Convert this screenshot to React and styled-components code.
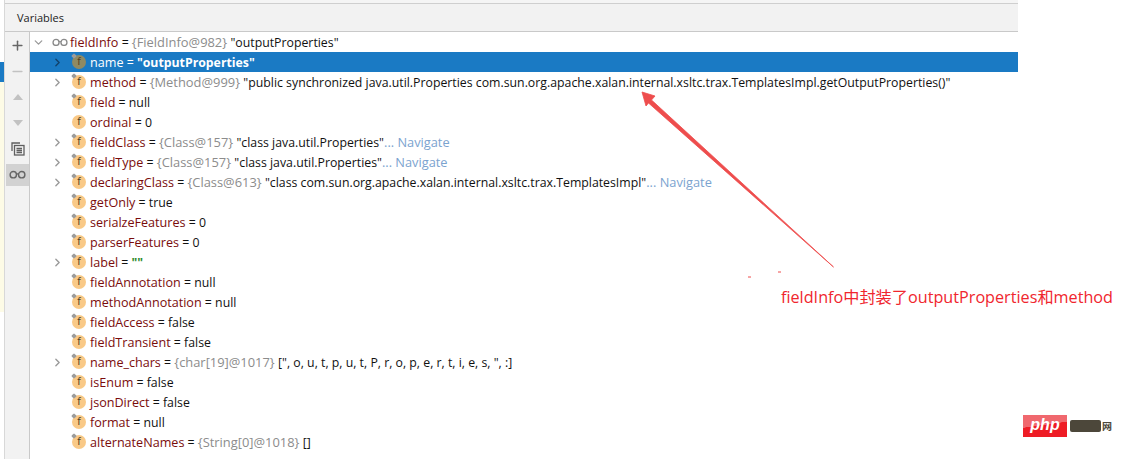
import React from 'react'
import styled, { createGlobalStyle } from 'styled-components'
import { ChevronRight, ChevronDown, Plus, Minus } from 'lucide-react'

const Global = createGlobalStyle`
  html, body { margin: 0; padding: 0; background: #fff; }
  body { width: 1123px; height: 459px; overflow: hidden; font-family: "Open Sans", "Noto Sans", sans-serif; }
`

const Page = styled.div`
  position: relative;
  display: flex;
  width: 1123px;
  height: 459px;
  background: #fff;
  overflow: hidden;
`

const Strip = styled.div`
  width: 4px;
  flex: none;
  background: linear-gradient(
    180deg,
    #fff 0 62px,
    #1a7ac4 62px 82px,
    #fdfbe6 82px 312px,
    #fff 312px 100%
  );
`

const Frame = styled.div`
  width: 1014px;
  height: 459px;
  flex: none;
  padding-top: 3px;
  box-sizing: border-box;
  display: flex;
  flex-direction: column;
  background: #f5f5f5;
  border-left: 1px solid #d8d8d8;
`

const Header = styled.div`
  height: 29px;
  box-sizing: border-box;
  background: #f2f2f2;
  border-top: 1px solid #cfcfcf;
  border-bottom: 1px solid #c9c9c9;
  padding-left: 12px;
  font-size: 11px;
  line-height: 27px;
  color: #222;
  flex: none;
`

const Body = styled.div`
  display: flex;
  flex: 1;
  min-height: 0;
  background: #fff;
`

const Rail = styled.div`
  width: 25px;
  box-sizing: border-box;
  flex: none;
  background: #f2f2f2;
  border-right: 1px solid #c9c9c9;
  display: flex;
  flex-direction: column;
  align-items: center;
  padding-left: 1px;
`

const RailButton = styled.div`
  width: 100%;
  height: 22px;
  margin: 2px 0;
  display: flex;
  align-items: center;
  justify-content: center;
  background: ${p => (p.$active ? '#d2d2d2' : 'transparent')};
  color: ${p => p.$color || '#6e6e6e'};
`

const Tree = styled.div`
  flex: 1;
  min-width: 0;
  overflow: hidden;
`

const Row = styled.div`
  height: 20px;
  display: flex;
  align-items: center;
  padding-left: ${p => (p.$root ? '0' : '19px')};
  background: ${p => (p.$selected ? '#1a7ac4' : 'transparent')};
  font-size: 12.3px;
  white-space: nowrap;
  color: #111;
`

const Arrow = styled.span`
  width: 16px;
  margin-right: ${p => (p.$root ? '6px' : '7px')};
  flex: none;
  display: flex;
  align-items: center;
  justify-content: center;
  color: ${p => (p.$selected ? '#12426b' : '#9a9a9a')};
`

const FieldBadge = styled.span`
  position: relative;
  width: 14px;
  height: 14px;
  margin-right: 4px;
  border-radius: 50%;
  background: ${p => (p.$selected ? '#8f8a63' : '#f9c987')};
  color: #4f3f24;
  flex: none;
  font-size: 10px;
  line-height: 14px;
  text-align: center;
  font-family: "DejaVu Sans", sans-serif;
  &::before {
    content: '';
    display: ${p => (p.$plain ? 'none' : 'block')};
    position: absolute;
    top: -1px;
    left: 0;
    width: 4px;
    height: 4px;
    background: #9c9c9c;
    transform: rotate(45deg);
    border-radius: 1px;
  }
`

const Name = styled.span`
  margin-left: ${p => (p.$root ? '2px' : '0')};
  font-size: 12.6px;
  color: ${p => (p.$selected ? '#fff' : '#7a0c0c')};
`

const Eq = styled.span`
  color: ${p => (p.$selected ? '#fff' : '#111')};
  white-space: pre;
`

const Ref = styled.span`
  color: #8c8c8c;
  font-size: 12.9px;
  white-space: pre;
`

const Strong = styled.span`
  color: #fff;
  font-weight: 700;
`

const Green = styled.span`
  color: #2c8a2c;
  font-weight: 700;
`

const Link = styled.span`
  color: #7ba3cf;
  font-size: 12.8px;
  white-space: pre;
`

const Note = styled.div`
  position: absolute;
  left: 781px;
  top: 287px;
  font-size: 16.2px;
  line-height: 20px;
  color: #f0262e;
  font-family: "Open Sans", "Noto Sans CJK SC", sans-serif;
  white-space: nowrap;
`

const ArrowDrawing = styled.svg`
  position: absolute;
  left: 630px;
  top: 85px;
`

const Stamp = styled.div`
  position: absolute;
  left: 1023px;
  top: 415px;
  display: flex;
  align-items: center;
  gap: 3px;
`

const PhpLogo = styled.div`
  width: 44px;
  height: 22px;
  background: linear-gradient(172deg, #f0686e 0 45%, #ee1c25 46% 100%);
  color: #fff;
  font-family: "Liberation Sans", sans-serif;
  font-style: italic;
  font-weight: 700;
  font-size: 16px;
  line-height: 20px;
  text-align: center;
`

const PhpBar = styled.div`
  display: flex;
  align-items: center;
  gap: 1px;
`

const PhpBlob = styled.div`
  width: 31px;
  height: 12px;
  background: #4c473a;
  border-radius: 2px;
`

const PhpGlyph = styled.span`
  font-family: "Noto Sans CJK SC", sans-serif;
  font-size: 10px;
  line-height: 12px;
  font-weight: 700;
  color: #4c473a;
`

const Glasses = ({ size = 16, color = '#8a8a8a' }) => (
  <svg width={size} height={size * 0.55} viewBox="0 0 18 10" fill="none" stroke={color} strokeWidth="1.5">
    <circle cx="4.5" cy="5" r="3.4" />
    <circle cx="13.5" cy="5" r="3.4" />
    <path d="M8 4.2h2" />
  </svg>
)

const Copy = () => (
  <svg width="14" height="14" viewBox="0 0 14 14" fill="none" stroke="#5f5f5f" strokeWidth="1.3">
    <path d="M1 9V1h8" />
    <rect x="3.5" y="3.5" width="9.5" height="9.5" fill="#f2f2f2" />
    <path d="M5.5 6.5h5.5M5.5 8.5h5.5M5.5 10.5h5.5" />
  </svg>
)

const Triangle = ({ up }) => (
  <svg width="12" height="8" viewBox="0 0 12 8">
    <path d={up ? 'M6 1l5 6H1z' : 'M6 7L1 1h10z'} fill="#c2c2c2" />
  </svg>
)

const rows = [
  { name: 'name', sel: true, arrow: true, value: <Strong>"outputProperties"</Strong> },
  { name: 'method', arrow: true, ref: '{Method@999} ', value: '"public synchronized java.util.Properties com.sun.org.apache.xalan.internal.xsltc.trax.TemplatesImpl.getOutputProperties()"' },
  { name: 'field', value: 'null' },
  { name: 'ordinal', plain: true, value: '0' },
  { name: 'fieldClass', arrow: true, ref: '{Class@157} ', value: '"class java.util.Properties"', nav: true },
  { name: 'fieldType', arrow: true, ref: '{Class@157} ', value: '"class java.util.Properties"', nav: true },
  { name: 'declaringClass', arrow: true, ref: '{Class@613} ', value: '"class com.sun.org.apache.xalan.internal.xsltc.trax.TemplatesImpl"', nav: true },
  { name: 'getOnly', value: 'true' },
  { name: 'serialzeFeatures', value: '0' },
  { name: 'parserFeatures', value: '0' },
  { name: 'label', arrow: true, value: <Green>""</Green> },
  { name: 'fieldAnnotation', value: 'null' },
  { name: 'methodAnnotation', value: 'null' },
  { name: 'fieldAccess', value: 'false' },
  { name: 'fieldTransient', value: 'false' },
  { name: 'name_chars', arrow: true, ref: '{char[19]@1017} ', value: '[", o, u, t, p, u, t, P, r, o, p, e, r, t, i, e, s, ", :]' },
  { name: 'isEnum', value: 'false' },
  { name: 'jsonDirect', value: 'false' },
  { name: 'format', value: 'null' },
  { name: 'alternateNames', ref: '{String[0]@1018} ', value: '[]' }
]

const App = () => (
  <Page>
    <Global />
    <Strip />
    <Frame>
      <Header>Variables</Header>
      <Body>
        <Rail>
          <RailButton $color="#666"><Plus size={15} strokeWidth={2.4} /></RailButton>
          <RailButton $color="#c2c2c2"><Minus size={15} strokeWidth={2.4} /></RailButton>
          <RailButton><Triangle up /></RailButton>
          <RailButton><Triangle /></RailButton>
          <RailButton><Copy /></RailButton>
          <RailButton $active><Glasses size={17} color="#666" /></RailButton>
        </Rail>
        <Tree>
          <Row $root>
            <Arrow $root><ChevronDown size={13} strokeWidth={2.4} /></Arrow>
            <Glasses />
            <Name $root>fieldInfo</Name>
            <Eq> = </Eq>
            <Ref>{'{FieldInfo@982} '}</Ref>
            "outputProperties"
          </Row>
          {rows.map(row => (
            <Row key={row.name} $selected={row.sel}>
              <Arrow $selected={row.sel}>
                {row.arrow && <ChevronRight size={13} strokeWidth={2.6} />}
              </Arrow>
              <FieldBadge $selected={row.sel} $plain={row.plain}>f</FieldBadge>
              <Name $selected={row.sel}>{row.name}</Name>
              <Eq $selected={row.sel}> = </Eq>
              {row.ref && <Ref>{row.ref}</Ref>}
              {row.value}
              {row.nav && <Link>... Navigate</Link>}
            </Row>
          ))}
        </Tree>
      </Body>
    </Frame>
    <ArrowDrawing width="210" height="200" viewBox="0 0 210 200">
      <path d="M12 7L25 11L21.5 15L203.5 182L18.5 18L16 21Z" fill="#ee4d4d" stroke="#ee4d4d" strokeWidth="0.8" />
      <path d="M118 192h3M148 187h3" stroke="#ee4d4d" strokeWidth="1" />
    </ArrowDrawing>
    <Note>fieldInfo中封装了outputProperties和method</Note>
    <Stamp>
      <PhpLogo>php</PhpLogo>
      <PhpBar>
        <PhpBlob />
        <PhpGlyph>网</PhpGlyph>
      </PhpBar>
    </Stamp>
  </Page>
)

export default App
